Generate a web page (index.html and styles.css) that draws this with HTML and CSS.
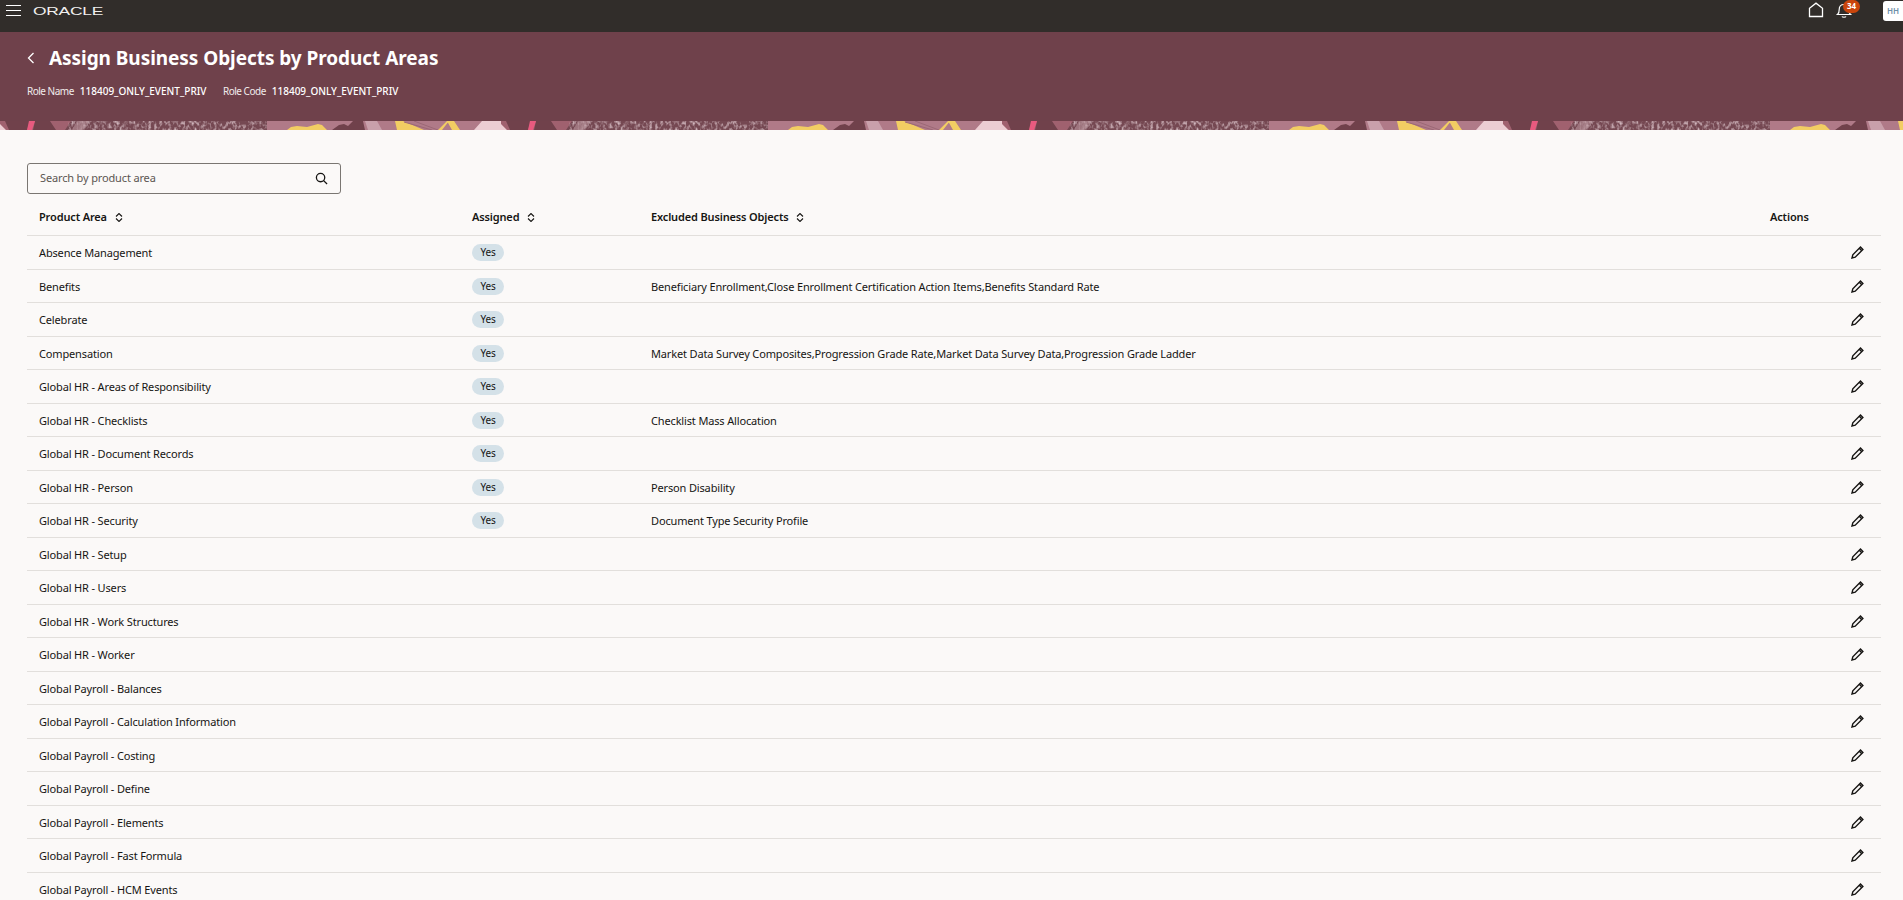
FILE: index.html
```html
<!DOCTYPE html>
<html lang="en">
<head>
    <meta charset="UTF-8">
    <title>Assign Business Objects by Product Areas</title>
    <link rel="stylesheet" href="styles.css">
</head>
<body>

    <!-- icons used by many rows -->
    <svg class="sprites" width="0" height="0">
        <symbol id="sortIcon" viewBox="0 0 8 9"><path d="M1 3.500l3-3 3 3M1 5.500l3 3 3-3" fill="none" stroke="#161513" stroke-width="1.100"/></symbol>
        <symbol id="editIcon" viewBox="0 0 13 13"><path d="M1 12l.8-3.200L9.500 1.100l2.400 2.400-7.700 7.700zM8.300 2.300l2.400 2.400" fill="none" stroke="#161513" stroke-width="1.400"/></symbol>
    </svg>

    <header class="topbar">
        <button class="menu-btn" aria-label="Menu"><span></span><span></span><span></span></button>
        <svg class="logo" width="72" height="12" viewBox="0 0 72 12"><text x="0" y="10.200" textLength="70" lengthAdjust="spacingAndGlyphs">ORACLE</text></svg>
        <div class="topbar-right">
            <svg class="home-icon" width="16" height="16" viewBox="0 0 16 16"><path d="M1.500 14.500V6.300L8 1.200l6.500 5.100v8.200z" fill="none" stroke="#fff" stroke-width="1.300"/></svg>
            <div class="bell">
                <svg width="16" height="18" viewBox="0 0 16 18"><path d="M1.500 13.500c1.400-1 1.700-2.500 1.700-5 0-3 2-5 4.800-5s4.800 2 4.800 5c0 2.500.3 4 1.700 5zM6 15.500c.5 1 3.500 1 4 0" fill="none" stroke="#fff" stroke-width="1.200"/></svg>
                <span class="badge">34</span>
            </div>
            <div class="avatar">HH</div>
        </div>
    </header>

    <section class="page-header">
        <div class="header-body">
            <div class="title-row">
                <svg class="back-icon" width="8" height="12" viewBox="0 0 8 12"><path d="M6.500 1L1.500 6l5 5" fill="none" stroke="#fff" stroke-width="1.300"/></svg>
                <h1>Assign Business Objects by Product Areas</h1>
            </div>
            <div class="role-row">
                <span class="role-label">Role Name</span><span class="role-value">118409_ONLY_EVENT_PRIV</span>
                <span class="role-label second">Role Code</span><span class="role-value">118409_ONLY_EVENT_PRIV</span>
            </div>
        </div>
        <svg class="band" width="100%" height="9">
            <defs>
                <filter id="grain" x="0" y="0" width="1" height="1">
                    <feTurbulence type="fractalNoise" baseFrequency="0.35 0.25" numOctaves="2" seed="4"/>
                    <feColorMatrix values="0 0 0 0 .70  0 0 0 0 .54  0 0 0 0 .58  0 0 0 2.200 -.95"/>
                </filter>
                <pattern id="bandTile" width="501" height="9" patternUnits="userSpaceOnUse">
                    <rect width="501" height="9" fill="#a0616f"/>
                    <path d="M0 3l6 6H0zM480 0h21v9h-28z" fill="#eccdd3"/>
                    <path d="M5 0h25l-3 9H9zM35 0h15l6 9H33z" fill="#70414b"/>
                    <path d="M29 0h6l-3 9h-5z" fill="#e85a7f"/>
                    <path d="M71 0H267v9H65z" fill="#754852"/>
                    <rect x="68" width="199" height="9" filter="url(#grain)"/>
                    <path d="M72 9l5-9h12l-6 9z" fill="#b9929b" opacity=".6"/>
                    <path d="M267 0h130v9H267zM397 0h85l-8 9h-83z" fill="#b07a88"/>
                    <path d="M365 0h12l5 9h-14z" fill="#c9a0ab"/>
                    <path d="M287 9l4-3 6-1 10 1 11-3 4 1 5 5z" fill="#f2cd63"/>
                    <path d="M332 9l7-5 5-1 4 2 5-5h10l2 9z" fill="#70414b"/>
                    <path d="M395 0h8l21 9h-27zM438 9l9-9 2 0-7 9zM447 0h7l6 9h-8z" fill="#f2cd63"/>
                    <path d="M404 1l28 8M414 0l24 9" stroke="#9b6775" stroke-width="1" fill="none"/>
                </pattern>
            </defs>
            <rect width="100%" height="9" fill="url(#bandTile)"/>
        </svg>
    </section>

    <main class="content">
        <div class="search-box">
            <span class="search-text">Search by product area</span>
            <svg width="13" height="13" viewBox="0 0 14 14"><circle cx="6" cy="6" r="4.500" fill="none" stroke="#161513" stroke-width="1.400"/><path d="M9.300 9.300L13 13" stroke="#161513" stroke-width="1.400"/></svg>
        </div>

        <div class="table">
            <div class="row head">
                <div class="col-area">Product Area <svg class="sort" width="8" height="9"><use href="#sortIcon"/></svg></div>
                <div class="col-assigned">Assigned <svg class="sort" width="8" height="9"><use href="#sortIcon"/></svg></div>
                <div class="col-excluded">Excluded Business Objects <svg class="sort" width="8" height="9"><use href="#sortIcon"/></svg></div>
                <div class="col-actions">Actions</div>
            </div>
            <div class="row"><div class="col-area">Absence Management</div><div class="col-assigned"><span class="pill">Yes</span></div><div class="col-excluded"></div><div class="col-actions"><svg class="edit" width="13" height="13"><use href="#editIcon"/></svg></div></div>
            <div class="row"><div class="col-area">Benefits</div><div class="col-assigned"><span class="pill">Yes</span></div><div class="col-excluded">Beneficiary Enrollment,Close Enrollment Certification Action Items,Benefits Standard Rate</div><div class="col-actions"><svg class="edit" width="13" height="13"><use href="#editIcon"/></svg></div></div>
            <div class="row"><div class="col-area">Celebrate</div><div class="col-assigned"><span class="pill">Yes</span></div><div class="col-excluded"></div><div class="col-actions"><svg class="edit" width="13" height="13"><use href="#editIcon"/></svg></div></div>
            <div class="row"><div class="col-area">Compensation</div><div class="col-assigned"><span class="pill">Yes</span></div><div class="col-excluded">Market Data Survey Composites,Progression Grade Rate,Market Data Survey Data,Progression Grade Ladder</div><div class="col-actions"><svg class="edit" width="13" height="13"><use href="#editIcon"/></svg></div></div>
            <div class="row"><div class="col-area">Global HR - Areas of Responsibility</div><div class="col-assigned"><span class="pill">Yes</span></div><div class="col-excluded"></div><div class="col-actions"><svg class="edit" width="13" height="13"><use href="#editIcon"/></svg></div></div>
            <div class="row"><div class="col-area">Global HR - Checklists</div><div class="col-assigned"><span class="pill">Yes</span></div><div class="col-excluded">Checklist Mass Allocation</div><div class="col-actions"><svg class="edit" width="13" height="13"><use href="#editIcon"/></svg></div></div>
            <div class="row"><div class="col-area">Global HR - Document Records</div><div class="col-assigned"><span class="pill">Yes</span></div><div class="col-excluded"></div><div class="col-actions"><svg class="edit" width="13" height="13"><use href="#editIcon"/></svg></div></div>
            <div class="row"><div class="col-area">Global HR - Person</div><div class="col-assigned"><span class="pill">Yes</span></div><div class="col-excluded">Person Disability</div><div class="col-actions"><svg class="edit" width="13" height="13"><use href="#editIcon"/></svg></div></div>
            <div class="row"><div class="col-area">Global HR - Security</div><div class="col-assigned"><span class="pill">Yes</span></div><div class="col-excluded">Document Type Security Profile</div><div class="col-actions"><svg class="edit" width="13" height="13"><use href="#editIcon"/></svg></div></div>
            <div class="row"><div class="col-area">Global HR - Setup</div><div class="col-assigned"></div><div class="col-excluded"></div><div class="col-actions"><svg class="edit" width="13" height="13"><use href="#editIcon"/></svg></div></div>
            <div class="row"><div class="col-area">Global HR - Users</div><div class="col-assigned"></div><div class="col-excluded"></div><div class="col-actions"><svg class="edit" width="13" height="13"><use href="#editIcon"/></svg></div></div>
            <div class="row"><div class="col-area">Global HR - Work Structures</div><div class="col-assigned"></div><div class="col-excluded"></div><div class="col-actions"><svg class="edit" width="13" height="13"><use href="#editIcon"/></svg></div></div>
            <div class="row"><div class="col-area">Global HR - Worker</div><div class="col-assigned"></div><div class="col-excluded"></div><div class="col-actions"><svg class="edit" width="13" height="13"><use href="#editIcon"/></svg></div></div>
            <div class="row"><div class="col-area">Global Payroll - Balances</div><div class="col-assigned"></div><div class="col-excluded"></div><div class="col-actions"><svg class="edit" width="13" height="13"><use href="#editIcon"/></svg></div></div>
            <div class="row"><div class="col-area">Global Payroll - Calculation Information</div><div class="col-assigned"></div><div class="col-excluded"></div><div class="col-actions"><svg class="edit" width="13" height="13"><use href="#editIcon"/></svg></div></div>
            <div class="row"><div class="col-area">Global Payroll - Costing</div><div class="col-assigned"></div><div class="col-excluded"></div><div class="col-actions"><svg class="edit" width="13" height="13"><use href="#editIcon"/></svg></div></div>
            <div class="row"><div class="col-area">Global Payroll - Define</div><div class="col-assigned"></div><div class="col-excluded"></div><div class="col-actions"><svg class="edit" width="13" height="13"><use href="#editIcon"/></svg></div></div>
            <div class="row"><div class="col-area">Global Payroll - Elements</div><div class="col-assigned"></div><div class="col-excluded"></div><div class="col-actions"><svg class="edit" width="13" height="13"><use href="#editIcon"/></svg></div></div>
            <div class="row"><div class="col-area">Global Payroll - Fast Formula</div><div class="col-assigned"></div><div class="col-excluded"></div><div class="col-actions"><svg class="edit" width="13" height="13"><use href="#editIcon"/></svg></div></div>
            <div class="row"><div class="col-area">Global Payroll - HCM Events</div><div class="col-assigned"></div><div class="col-excluded"></div><div class="col-actions"><svg class="edit" width="13" height="13"><use href="#editIcon"/></svg></div></div>
        </div>
    </main>

</body>
</html>
```

FILE: styles.css
```css
* {
    box-sizing: border-box;
}

body {
    font-family: "Noto Sans", Arial, sans-serif;
    margin: 0;
    height: 900px;
    overflow: hidden;
    background-color: #fbf9f8;
    color: #161513;
    font-size: 11px;
    letter-spacing: -0.15px;
}

.sprites {
    display: block;
}

.topbar {
    height: 32px;
    background-color: #312d2a;
    display: flex;
    align-items: flex-start;
    padding-left: 6px;
}

.menu-btn {
    width: 15px;
    height: 11px;
    margin-top: 5px;
    padding: 0;
    border: none;
    background: none;
    display: flex;
    flex-direction: column;
    justify-content: space-between;
}

.menu-btn span {
    height: 1.400px;
    background-color: #fff;
}

.logo {
    margin: 5px 0 0 12px;
}

.logo text {
    font-family: "Liberation Sans", Arial, sans-serif;
    font-size: 10.200px;
    fill: #f0efee;
}

.topbar-right {
    margin-left: auto;
    display: flex;
    align-items: flex-start;
}

.home-icon {
    margin-top: 2px;
}

.bell {
    position: relative;
    width: 16px;
    height: 18px;
    margin: 1px 0 0 12px;
}

.badge {
    position: absolute;
    top: -1px;
    left: 7px;
    width: 17px;
    height: 13px;
    border-radius: 7px;
    background-color: #c9450c;
    color: #fff;
    font-size: 8px;
    font-weight: 700;
    letter-spacing: 0;
    line-height: 12px;
    text-align: center;
}

.avatar {
    width: 20px;
    height: 20px;
    margin: 1px 0 0 31px;
    background-color: #fff;
    border-radius: 3px 0 0 3px;
    color: #6d8fa8;
    font-size: 8px;
    font-weight: 600;
    letter-spacing: 0;
    line-height: 20px;
    text-align: center;
}

.page-header {
    height: 98px;
    background-color: #6f414b;
    color: #fff;
    display: flex;
    flex-direction: column;
}

.header-body {
    height: 89px;
    padding: 10px 27px 0;
}

.title-row {
    display: flex;
    align-items: center;
    height: 32px;
}

.back-icon {
    margin-right: 14px;
}

h1 {
    margin: 0;
    font-size: 19px;
    font-weight: 700;
    letter-spacing: -0.06px;
}

.role-row {
    margin-top: 10px;
    font-size: 10px;
    letter-spacing: 0;
    color: #f1ecec;
}

.role-label {
    letter-spacing: -0.5px;
}

.role-value {
    margin-left: 6px;
    font-weight: 500;
    color: #fff;
}

.role-label.second {
    margin-left: 14px;
}

.band {
    display: block;
    flex-shrink: 0;
}

.content {
    padding: 33px 22px 0 27px;
}

.search-box {
    width: 314px;
    height: 31px;
    border: 1px solid #7a7672;
    border-radius: 3px;
    padding: 0 12px 0 12px;
    display: flex;
    align-items: center;
    justify-content: space-between;
    color: #5b5652;
}

.search-text {
    margin-top: -2px;
}

.row {
    display: flex;
    align-items: center;
    height: 33.500px;
    border-bottom: 1px solid #e2dfdc;
}

.row.head {
    height: 42.400px;
    padding-top: 4px;
    font-weight: 600;
}

.col-area {
    width: 445px;
    padding-left: 12px;
}

.col-assigned {
    width: 179px;
}

.col-excluded {
    flex: 1;
}

.col-actions {
    width: 112px;
    padding-right: 17px;
}

.head .col-actions {
    padding-left: 1px;
}

.sort {
    margin-left: 5px;
    vertical-align: -1px;
}

.pill {
    display: block;
    width: 32px;
    height: 17px;
    border-radius: 9px;
    background-color: #d4e1e8;
    font-size: 10px;
    line-height: 17px;
    text-align: center;
}

.edit {
    display: block;
    margin-left: auto;
}
```
